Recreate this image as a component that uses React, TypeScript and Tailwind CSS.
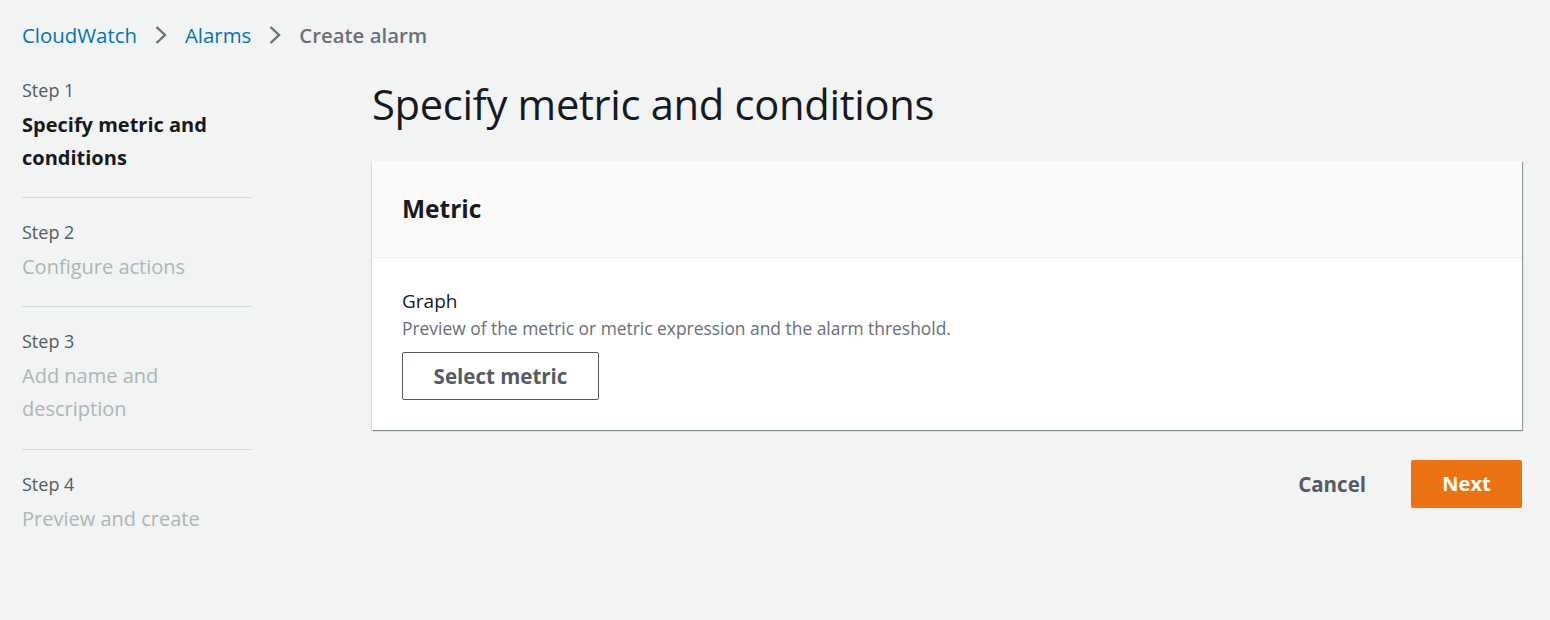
// Assistant de création d'alarme, étape 1

const steps = [
  { label: 'Step 1', title: 'Specify metric and conditions', active: true },
  { label: 'Step 2', title: 'Configure actions', active: false },
  { label: 'Step 3', title: 'Add name and description', active: false },
  { label: 'Step 4', title: 'Preview and create', active: false },
];

function Chevron() {
  return (
    <svg width="14" height="20" viewBox="0 0 14 20" fill="none" className="shrink-0">
      <polyline points="2.5,2 11,10 2.5,18" stroke="#687078" strokeWidth="2.4" strokeLinejoin="miter" />
    </svg>
  );
}

export default function App() {
  return (
    <div
      className="min-h-[620px] w-full bg-[#f2f3f3] text-[#16191f]"
      style={{ fontFamily: '"Open Sans", "Noto Sans", Arial, sans-serif' }}
    >
      {/* Fil d'Ariane */}
      <nav className="flex items-center gap-[17px] px-[22px] pt-[21px] pb-[1px] text-[20.4px] leading-[28px]">
        <a href="#" className="text-[#0073bb]">CloudWatch</a>
        <Chevron />
        <a href="#" className="text-[#0073bb]">Alarms</a>
        <Chevron />
        <span className="font-semibold text-[#687078]">Create alarm</span>
      </nav>

      <div className="flex pl-[22px] pr-[28px]">
        {/* Étapes */}
        <ul className="w-[230px] shrink-0 pt-[28px]">
          {steps.map((s, i) => (
            <li
              key={s.label}
              className={`${i === 0 ? 'pt-0' : 'pt-[22px]'} ${i === 2 ? 'pb-[24px]' : 'pb-[23px]'} ${i < steps.length - 1 ? 'border-b border-[#d5dbdb]' : ''}`}
            >
              <div className="text-[18px] leading-[24px] text-[#545b64]">{s.label}</div>
              <div
                className={`mt-[6px] text-[20px] leading-[33px] ${s.active ? 'font-bold text-[#16191f]' : 'text-[#aab7b8]'}`}
              >
                {s.title}
              </div>
            </li>
          ))}
        </ul>

        {/* Contenu principal */}
        <main className="ml-[120px] flex-1">
          <h1 className="mt-[28px] text-[41.7px] leading-[52px] tracking-[-0.3px] text-[#16191f]">
            Specify metric and conditions
          </h1>

          <section className="mt-[31px] bg-white shadow-[1px_1px_1px_0_rgba(0,28,36,0.3),1px_1px_0_0_rgba(0,28,36,0.15),-1px_1px_1px_0_rgba(0,28,36,0.1)]">
            <div className="flex h-[97px] items-center border-b border-[#eaeded] bg-[#fafafa] px-[30px]">
              <h2 className="text-[24.5px] font-bold">Metric</h2>
            </div>
            <div className="px-[30px] pt-[30px] pb-[30px]">
              <div className="text-[19px] leading-[26px]">Graph</div>
              <p className="text-[17.4px] leading-[28px] text-[#687078]">
                Preview of the metric or metric expression and the alarm threshold.
              </p>
              <button className="mt-[10px] h-[48px] w-[197px] rounded-[2px] border border-[#545b64] bg-white text-[20.5px] font-bold text-[#545b64]">
                Select metric
              </button>
            </div>
          </section>

          <div className="mt-[30px] flex items-center justify-end gap-[45px]">
            <button className="text-[20.5px] font-bold text-[#545b64]">Cancel</button>
            <button className="h-[48px] w-[111px] rounded-[2px] bg-[#ec7211] text-[20px] font-bold text-white">
              Next
            </button>
          </div>
        </main>
      </div>
    </div>
  );
}
